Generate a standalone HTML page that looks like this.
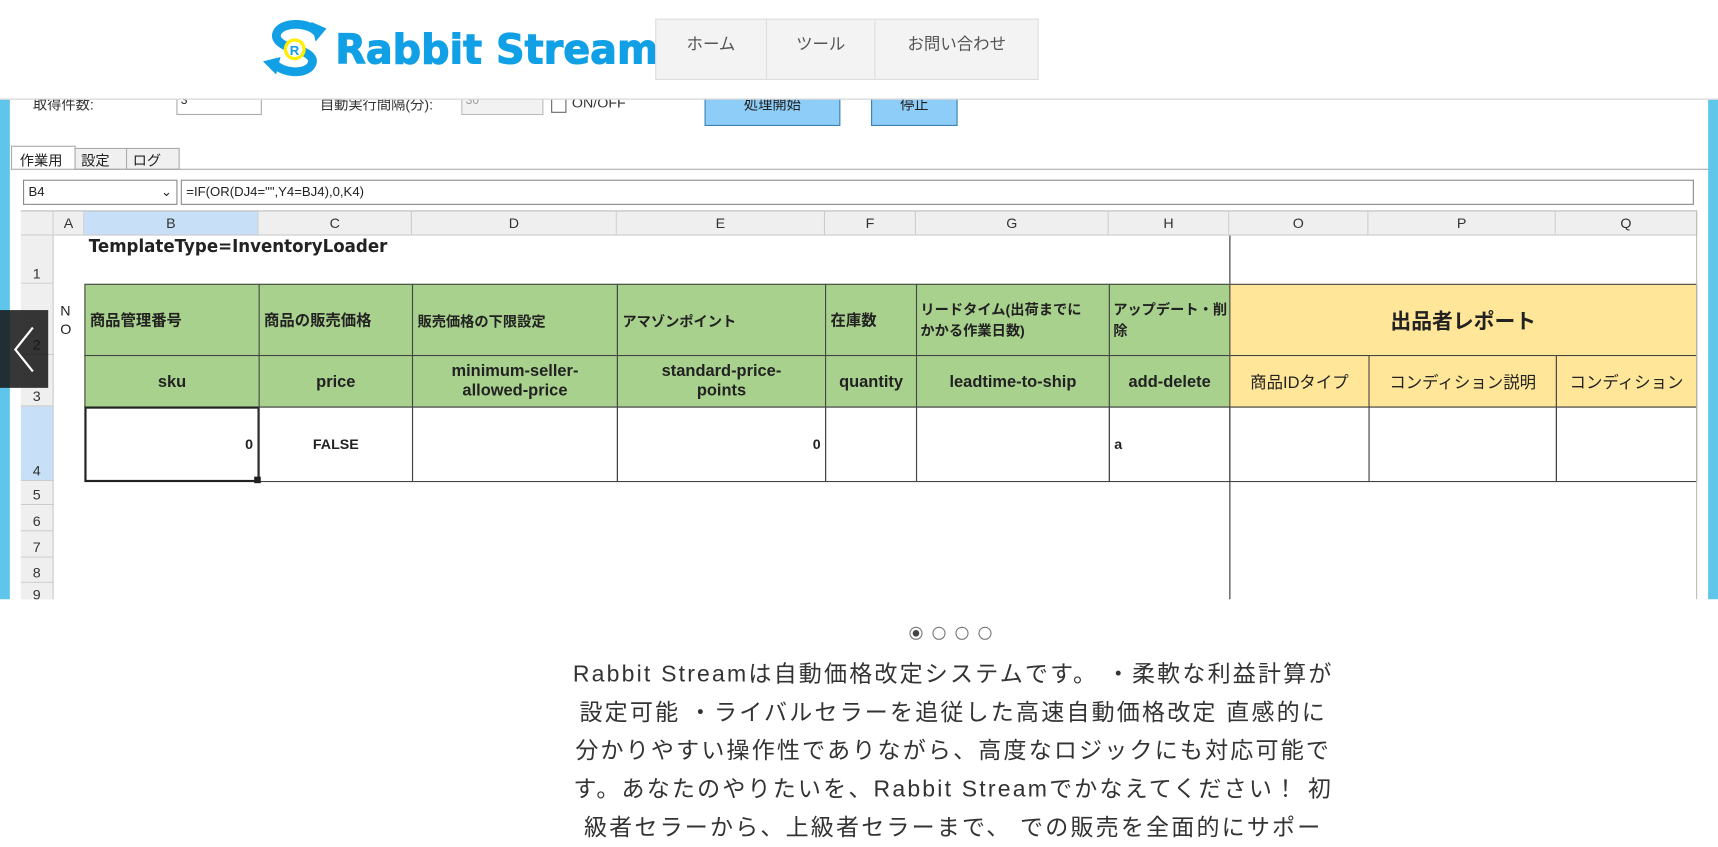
<!DOCTYPE html>
<html><head><meta charset="utf-8">
<style>
*{margin:0;padding:0;box-sizing:border-box}
html,body{width:1718px;height:842px;overflow:hidden;background:#fff}
#w{position:absolute;left:0;top:0;width:1568px;height:769px;transform:scale(1.09566);transform-origin:0 0;font-family:"Liberation Sans","Noto Sans CJK JP",sans-serif;color:#222}
.a{position:absolute}
.nav{left:598px;top:17px;width:350px;height:56px;background:#f3f3f3;border:1px solid #ddd;display:flex}
.nav div{height:100%;border-right:1px solid #ddd;text-align:center;color:#555;font-size:15px;padding-top:11px}
.cell{position:absolute;border:1px solid #444;font-weight:bold;font-size:14px;display:flex;align-items:center}
.g{background:#a9d18e}.y{background:#ffe699}
.hd{position:absolute;background:#efefef;border-right:1px solid #ccc;border-bottom:1px solid #ccc;font-size:13px;color:#333;text-align:center}
.rh{position:absolute;left:19px;width:30px;background:#efefef;border-bottom:1px solid #ccc;border-right:1px solid #ccc;font-size:13px;color:#333;text-align:center;display:flex;align-items:flex-end;justify-content:center;padding-bottom:1px}
.dot{position:absolute;top:572px;width:12px;height:12px;border:1px solid #777;border-radius:50%}
</style></head><body><div id="w">
<svg class="a" style="left:238px;top:18px" width="64" height="52" viewBox="0 0 64 52">
<path d="M52 12 C44 2 22 2 16 10 C10 18 20 24 32 27 C44 30 52 36 44 44 C36 50 20 48 12 40" fill="none" stroke="#11a0e6" stroke-width="8"/>
<polygon points="46,2 60,8 50,20" fill="#11a0e6"/><polygon points="2,38 18,34 14,50" fill="#11a0e6"/>
<circle cx="31" cy="27" r="10" fill="#ffee00"/><circle cx="31" cy="27" r="7" fill="#fff"/>
<text x="26.5" y="32" font-size="12" font-weight="bold" fill="#11a0e6" font-family="Liberation Sans">R</text>
</svg>
<div class="a" style="left:306px;top:24px;font-size:37px;font-weight:bold;color:#11a0e6;font-family:'DejaVu Sans',sans-serif;transform:scaleX(0.98);transform-origin:0 0;-webkit-text-stroke:1px #11a0e6">Rabbit Stream</div>
<div class="a nav"><div style="width:101px">ホーム</div><div style="width:100px">ツール</div><div style="width:148px;border-right:none">お問い合わせ</div></div>
<div class="a" style="left:0;top:90px;width:1568px;height:1px;background:#ccc"></div>
<div class="a" style="left:0;top:91px;width:1568px;height:456px;background:#fff;overflow:hidden">
 <div class="a" style="left:0;top:0;width:9px;height:456px;background:#5fc5ea"></div>
 <div class="a" style="left:1559px;top:0;width:9px;height:456px;background:#5fc5ea"></div>
 <div class="a" style="left:30px;top:-6px;font-size:13px;color:#333">取得件数:</div>
 <div class="a" style="left:161px;top:-6px;width:78px;height:20px;border:1px solid #aaa;font-size:11px;padding-left:3px">3</div>
 <div class="a" style="left:292px;top:-6px;font-size:13px;color:#333">自動実行間隔(分):</div>
 <div class="a" style="left:421px;top:-6px;width:75px;height:20px;border:1px solid #bbb;background:#f2f2f2;font-size:11px;color:#999;padding-left:3px">30</div>
 <div class="a" style="left:503px;top:-3px;width:14px;height:15px;border:1px solid #666"></div>
 <div class="a" style="left:522px;top:-5px;font-size:13px;color:#333">ON/OFF</div>
 <div class="a" style="left:643px;top:-8px;width:124px;height:32px;background:#8dcdf7;border:1px solid #3b7fb0;font-size:13px;text-align:center;padding-top:1px">処理開始</div>
 <div class="a" style="left:795px;top:-8px;width:79px;height:32px;background:#8dcdf7;border:1px solid #3b7fb0;font-size:13px;text-align:center;padding-top:1px">停止</div>
 <div class="a" style="left:10px;top:42px;width:59px;height:22px;background:#fff;border:1px solid #aaa;border-bottom:none;font-size:13px;padding:2px 0 0 7px">作業用</div>
 <div class="a" style="left:68px;top:44px;width:48px;height:20px;background:#f0f0f0;border:1px solid #aaa;font-size:13px;padding:0 0 0 5px">設定</div>
 <div class="a" style="left:115px;top:44px;width:49px;height:20px;background:#f0f0f0;border:1px solid #aaa;font-size:13px;padding:0 0 0 5px">ログ</div>
 <div class="a" style="left:10px;top:63px;width:1549px;height:1px;background:#aaa"></div>
 <div class="a" style="left:21px;top:73px;width:141px;height:23px;border:1px solid #888;font-size:12px;padding:3px 4px">B4<span style="position:absolute;right:4px;top:3px">⌄</span></div>
 <div class="a" style="left:165px;top:73px;width:1381px;height:23px;border:1px solid #888;font-size:12px;padding:3px 4px">=IF(OR(DJ4="",Y4=BJ4),0,K4)</div>
 <div class="a" style="left:19px;top:101px;width:1530px;height:1px;background:#bbb"></div>
 <div class="a" style="left:0;top:102px">
  <div class="hd" style="left:19px;top:0;width:30px;height:22px"></div>
  <div class="hd" style="left:49px;top:0;width:28px;height:22px;line-height:21px">A</div>
  <div class="hd" style="left:77px;top:0;width:159px;height:22px;line-height:21px;background:#c7e0f7">B</div>
  <div class="hd" style="left:236px;top:0;width:140px;height:22px;line-height:21px">C</div>
  <div class="hd" style="left:376px;top:0;width:187px;height:22px;line-height:21px">D</div>
  <div class="hd" style="left:563px;top:0;width:190px;height:22px;line-height:21px">E</div>
  <div class="hd" style="left:753px;top:0;width:83px;height:22px;line-height:21px">F</div>
  <div class="hd" style="left:836px;top:0;width:176px;height:22px;line-height:21px">G</div>
  <div class="hd" style="left:1012px;top:0;width:110px;height:22px;line-height:21px">H</div>
  <div class="hd" style="left:1122px;top:0;width:127px;height:22px;line-height:21px">O</div>
  <div class="hd" style="left:1249px;top:0;width:171px;height:22px;line-height:21px">P</div>
  <div class="hd" style="left:1420px;top:0;width:129px;height:22px;line-height:21px">Q</div>
 </div>
 <div class="rh" style="top:124px;height:44px">1</div>
 <div class="rh" style="top:168px;height:65px">2</div>
 <div class="rh" style="top:233px;height:47px">3</div>
 <div class="rh" style="top:280px;height:68px;background:#c7e0f7">4</div>
 <div class="rh" style="top:348px;height:22px">5</div>
 <div class="rh" style="top:370px;height:24px">6</div>
 <div class="rh" style="top:394px;height:24px">7</div>
 <div class="rh" style="top:418px;height:23px">8</div>
 <div class="rh" style="top:441px;height:20px">9</div>
 <div class="a" style="left:81px;top:124px;font-size:16px;font-weight:bold;font-family:'DejaVu Sans',sans-serif;transform:scaleX(0.95);transform-origin:0 0">TemplateType=InventoryLoader</div>
 <div class="a" style="left:55px;top:184px;font-size:13px;line-height:17px">N<br>O</div>
 <div class="a" style="left:1122px;top:124px;width:1px;height:332px;background:#333"></div>
 <div class="cell g" style="left:77px;top:168px;width:160px;height:66px;padding-left:4px">商品管理番号</div>
 <div class="cell g" style="left:236px;top:168px;width:141px;height:66px;padding-left:4px">商品の販売価格</div>
 <div class="cell g" style="left:376px;top:168px;width:188px;height:66px;padding-left:4px;font-size:13px">販売価格の下限設定</div>
 <div class="cell g" style="left:563px;top:168px;width:191px;height:66px;padding-left:4px;font-size:13px">アマゾンポイント</div>
 <div class="cell g" style="left:753px;top:168px;width:84px;height:66px;padding-left:4px">在庫数</div>
 <div class="cell g" style="left:836px;top:168px;width:177px;height:66px;padding-left:3px;font-size:13px;line-height:19px">リードタイム(出荷までに<br>かかる作業日数)</div>
 <div class="cell g" style="left:1012px;top:168px;width:111px;height:66px;padding-left:3px;font-size:13px;line-height:19px">アップデート・削<br>除</div>
 <div class="cell y" style="left:1122px;top:168px;width:427px;height:66px;justify-content:center;font-size:19px">出品者レポート</div>
 <div class="cell g" style="left:77px;top:233px;width:160px;height:48px;justify-content:center;font-size:15px">sku</div>
 <div class="cell g" style="left:236px;top:233px;width:141px;height:48px;justify-content:center;font-size:15px">price</div>
 <div class="cell g" style="left:376px;top:233px;width:188px;height:48px;justify-content:center;text-align:center;font-size:15px;line-height:18px">minimum-seller-<br>allowed-price</div>
 <div class="cell g" style="left:563px;top:233px;width:191px;height:48px;justify-content:center;text-align:center;font-size:15px;line-height:18px">standard-price-<br>points</div>
 <div class="cell g" style="left:753px;top:233px;width:84px;height:48px;justify-content:center;font-size:15px">quantity</div>
 <div class="cell g" style="left:836px;top:233px;width:177px;height:48px;justify-content:center;font-size:15px">leadtime-to-ship</div>
 <div class="cell g" style="left:1012px;top:233px;width:111px;height:48px;justify-content:center;font-size:15px">add-delete</div>
 <div class="cell y" style="left:1122px;top:233px;width:128px;height:48px;justify-content:center;font-weight:normal;font-size:15px">商品IDタイプ</div>
 <div class="cell y" style="left:1249px;top:233px;width:172px;height:48px;justify-content:center;font-weight:normal;font-size:15px">コンディション説明</div>
 <div class="cell y" style="left:1420px;top:233px;width:129px;height:48px;justify-content:center;font-weight:normal;font-size:15px">コンディション</div>
 <div class="cell" style="left:77px;top:280px;width:160px;height:69px;justify-content:flex-end;padding-right:4px;font-size:13px;border:2px solid #222">0</div>
 <div class="cell" style="left:236px;top:280px;width:141px;height:69px;justify-content:center;font-size:13px">FALSE</div>
 <div class="cell" style="left:376px;top:280px;width:188px;height:69px"></div>
 <div class="cell" style="left:563px;top:280px;width:191px;height:69px;justify-content:flex-end;padding-right:4px;font-size:13px">0</div>
 <div class="cell" style="left:753px;top:280px;width:84px;height:69px"></div>
 <div class="cell" style="left:836px;top:280px;width:177px;height:69px"></div>
 <div class="cell" style="left:1012px;top:280px;width:111px;height:69px;padding-left:4px;font-size:13px">a</div>
 <div class="cell" style="left:1122px;top:280px;width:128px;height:69px"></div>
 <div class="cell" style="left:1249px;top:280px;width:172px;height:69px"></div>
 <div class="cell" style="left:1420px;top:280px;width:129px;height:69px"></div>
 <div class="a" style="left:232px;top:344px;width:6px;height:6px;background:#222"></div>
 <div class="a" style="left:1548px;top:101px;width:1px;height:355px;background:#bbb"></div>
</div>
<div class="a" style="left:0;top:283px;width:44px;height:71px;background:rgba(20,20,20,0.85)"></div>
<svg class="a" style="left:8px;top:296px" width="26" height="46"><path d="M22 3 L6 23 L22 43" fill="none" stroke="#fff" stroke-width="2"/></svg>
<div class="dot" style="left:830px"><div style="position:absolute;left:2px;top:2px;width:6px;height:6px;border-radius:50%;background:#444"></div></div>
<div class="dot" style="left:851px"></div>
<div class="dot" style="left:872px"></div>
<div class="dot" style="left:893px"></div>
<div class="a" style="left:470px;top:598px;width:800px;text-align:center;font-size:21px;letter-spacing:2px;line-height:35px;color:#333">Rabbit Streamは自動価格改定システムです。 ・柔軟な利益計算が<br>設定可能 ・ライバルセラーを追従した高速自動価格改定 直感的に<br>分かりやすい操作性でありながら、高度なロジックにも対応可能で<br>す。あなたのやりたいを、Rabbit Streamでかなえてください！ 初<br>級者セラーから、上級者セラーまで、 での販売を全面的にサポー</div>
</div></body></html>
